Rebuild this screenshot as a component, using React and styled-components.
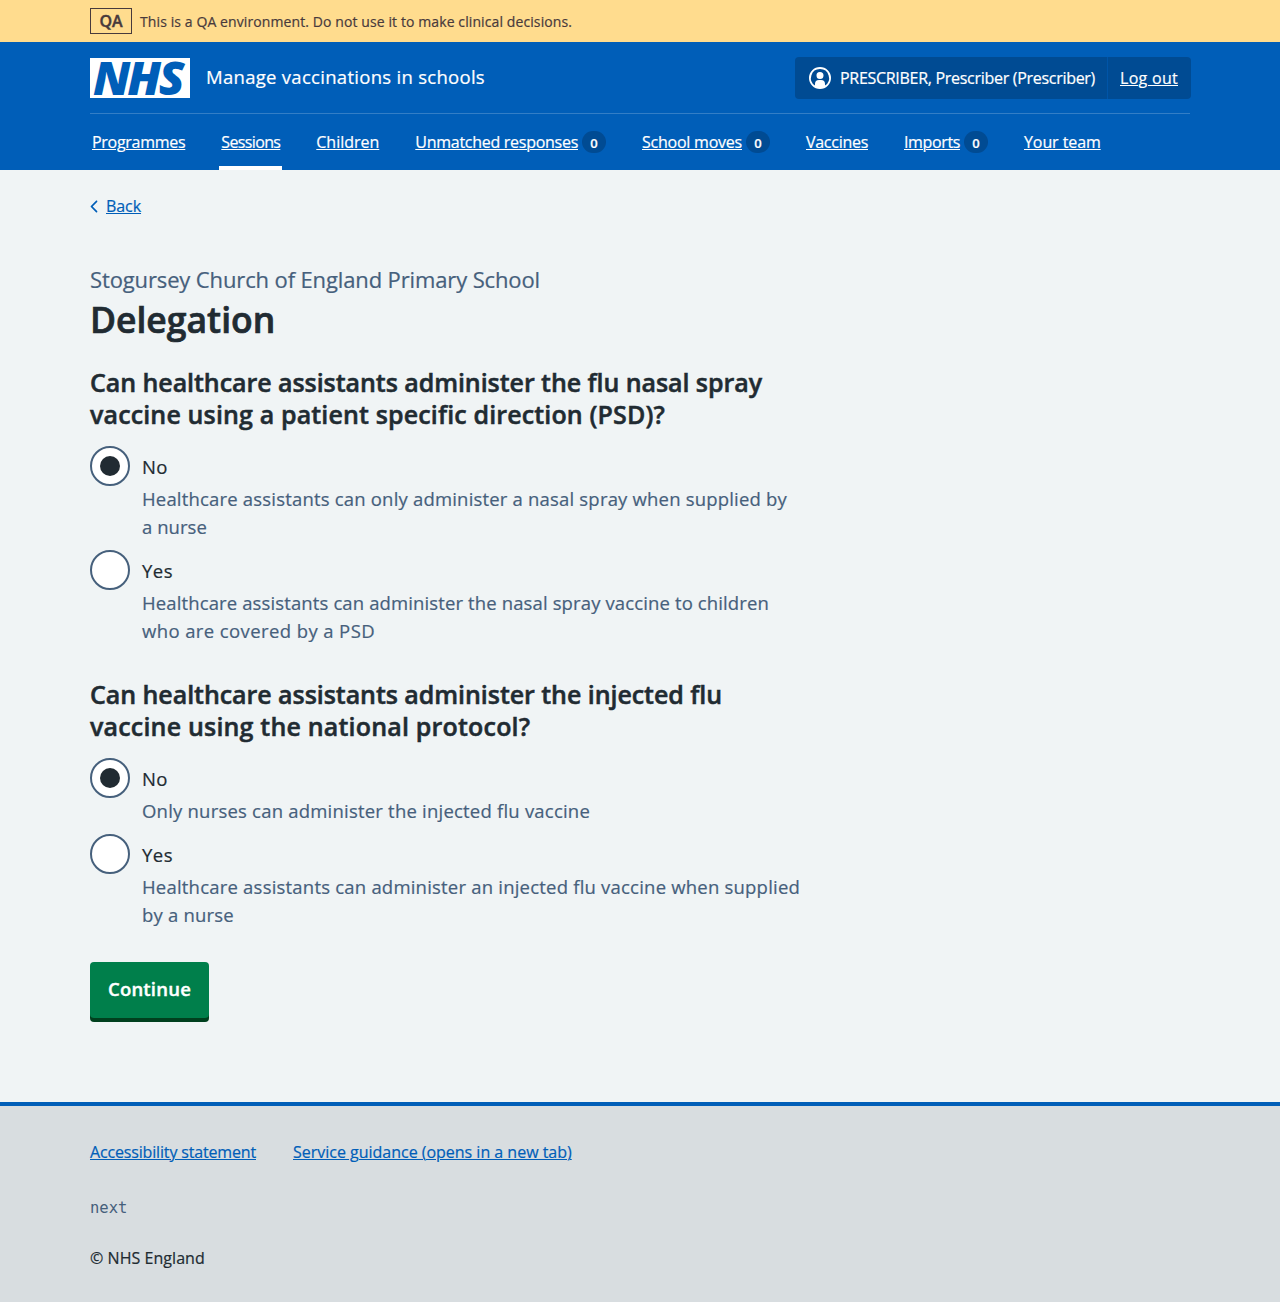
import React from "react";
import styled, { createGlobalStyle } from "styled-components";

const GlobalStyle = createGlobalStyle`
  *, *::before, *::after { box-sizing: border-box; }
  body {
    margin: 0;
    background: #d8dde0;
    color: #212b32;
    font-family: "Open Sans", "Noto Sans", sans-serif;
    font-size: 16px;
    line-height: 24px;
    -webkit-text-stroke: 0.2px;
  }
  h1, h2, p, ul { margin: 0; padding: 0; }
  ul { list-style: none; }
`;

const Container = styled.div`
  width: 1100px;
  margin: 0 auto;
`;

const Tracked = styled.span`
  letter-spacing: ${(p) => p.$track || 0}px;
  white-space: nowrap;
`;

/* Environment banner */
const Banner = styled.div`
  height: 42px;
  background: #ffdc8e;
  color: #483a3c;
`;
const BannerInner = styled(Container)`
  display: flex;
  align-items: center;
  gap: 8px;
  height: 42px;
  font-size: 14px;
`;
const BannerText = styled(Tracked)`
  padding-top: 2px;
`;
const EnvTag = styled.strong`
  width: 42px;
  height: 26px;
  border: 1px solid #483a3c;
  font-size: 16px;
  font-weight: 600;
  line-height: 24px;
  text-align: center;
  -webkit-text-stroke: 0.4px;
`;

/* Header */
const Header = styled.header`
  height: 128px;
  background: #005eb8;
  color: #fff;
`;
const ServiceRow = styled.div`
  display: flex;
  align-items: center;
  height: 72px;
  border-bottom: 1px solid #337ec6;
`;
const Logo = styled.svg`
  display: block;
  width: 100px;
  height: 40px;
  overflow: visible;
  background: #fff;
  fill: #005eb8;
`;
const LogoText = styled.text`
  font-family: "Open Sans", sans-serif;
  font-size: 45.5px;
  font-style: italic;
  font-weight: 800;
  -webkit-text-stroke: 0;
`;
const ServiceName = styled.span`
  flex: 1;
  margin-left: 16px;
  padding-bottom: 2px;
  font-size: 18.5px;
  line-height: 28px;
`;
const Account = styled.div`
  display: flex;
  width: 396px;
  height: 42px;
  margin-right: -1px;
  border-radius: 4px;
  background: #004b93;
  line-height: 42px;
`;
const AccountUser = styled.div`
  display: flex;
  align-items: center;
  gap: 8px;
  width: 313px;
  padding-left: 13px;
  border-right: 1px solid #0055a8;
`;
const UserIcon = styled.svg`
  width: 24px;
  height: 24px;
  flex: none;
  fill: #fff;
`;
const HeaderLink = styled.a`
  color: #fff;
  text-decoration: underline;
  text-decoration-thickness: 1px;
  text-underline-offset: 1px;
`;
const AccountLink = styled(HeaderLink)`
  padding-left: 12px;
`;
const Nav = styled.ul`
  display: flex;
  gap: 32px;
  height: 56px;
`;
const NavItem = styled.li`
  display: flex;
  align-items: center;
  gap: 4px;
  padding: 4px 2px 0;
  border-bottom: 4px solid ${(p) => (p.$current ? "#fff" : "transparent")};
`;
const NavLabel = styled(HeaderLink)`
  width: ${(p) => p.$width}px;
  letter-spacing: ${(p) => p.$track}px;
  white-space: nowrap;
`;
const Count = styled.span`
  width: 24px;
  height: 22px;
  border-radius: 12px;
  background: #004b93;
  font-size: 13px;
  font-weight: 600;
  line-height: 24px;
  text-align: center;
`;

/* Page body */
const Page = styled.main`
  height: 932px;
  padding-top: 24px;
  background: #f0f4f5;
`;
const BackLink = styled.a`
  display: flex;
  align-items: center;
  gap: 6px;
  margin-left: -2px;
  color: #005eb8;
  text-decoration: underline;
  text-decoration-thickness: 1px;
  text-underline-offset: 1px;
`;
const Chevron = styled.svg`
  width: 12px;
  height: 17px;
  fill: #005eb8;
`;
const Caption = styled.p`
  margin-top: 45px;
  color: #46607c;
  font-size: 22px;
  line-height: 32px;
`;
const Title = styled.h1`
  margin-top: 4px;
  font-size: 35.5px;
  font-weight: 600;
  line-height: 40px;
  -webkit-text-stroke: 0.7px;
`;
const Question = styled.h2`
  display: flex;
  flex-direction: column;
  margin-top: ${(p) => p.$gap}px;
  font-size: 25px;
  font-weight: 600;
  line-height: 32px;
  -webkit-text-stroke: 0.5px;
`;
const Options = styled.div`
  display: flex;
  flex-direction: column;
  gap: 9px;
  margin-top: 16px;
`;
const Option = styled.label`
  display: flex;
  gap: 12px;
  font-size: 18.5px;
  line-height: 28px;
`;
const Radio = styled.span`
  display: grid;
  place-items: center;
  flex: none;
  width: 40px;
  height: 40px;
  border: 2px solid #46607c;
  border-radius: 50%;
  background: #fff;
`;
const Dot = styled.span`
  width: 20px;
  height: 20px;
  border-radius: 50%;
  background: #212b32;
`;
const OptionBody = styled.span`
  display: flex;
  flex-direction: column;
  gap: 4px;
  padding-top: 7px;
`;
const Hint = styled.span`
  display: flex;
  flex-direction: column;
  color: #46607c;
`;
const Button = styled.button`
  display: block;
  width: 119px;
  height: 56px;
  margin-top: 33px;
  padding: 0 0 2px;
  border: 0;
  border-radius: 4px;
  background: #007f4b;
  box-shadow: 0 4px 0 #00401e;
  color: #fff;
  font: 600 18.5px/54px "Open Sans", sans-serif;
  text-align: center;
  -webkit-text-stroke: 0.4px;
`;

/* Footer */
const Footer = styled.footer`
  height: 200px;
  padding-top: 34px;
  border-top: 4px solid #005eb8;
  background: #d8dde0;
`;
const FooterLinks = styled.div`
  display: flex;
  gap: 37px;
`;
const FooterLink = styled.a`
  color: #005eb8;
  letter-spacing: ${(p) => p.$track}px;
  text-decoration: underline;
  text-decoration-thickness: 1px;
  text-underline-offset: 1px;
`;
const Version = styled.p`
  margin-top: 32px;
  color: #46607c;
  font-family: "DejaVu Sans Mono", monospace;
  font-size: 15.5px;
  -webkit-text-stroke: 0;
`;
const Copyright = styled.p`
  margin-top: 26px;
`;

const navItems = [
  { label: "Programmes", width: 93.3, track: -0.284 },
  { label: "Sessions", width: 59, track: -0.639, current: true },
  { label: "Children", width: 63, track: -0.012 },
  { label: "Unmatched responses", width: 162.7, track: -0.274, count: 0 },
  { label: "School moves", width: 100, track: -0.228, count: 0 },
  { label: "Vaccines", width: 62, track: -0.277 },
  { label: "Imports", width: 56, track: -0.366, count: 0 },
  { label: "Your team", width: 76.7, track: -0.085 },
];

const questions = [
  {
    gap: 27,
    lines: [
      ["Can healthcare assistants administer the flu nasal spray", -0.056],
      ["vaccine using a patient specific direction (PSD)?", 0.143],
    ],
    options: [
      {
        label: ["No", 0.4],
        checked: true,
        hint: [
          ["Healthcare assistants can only administer a nasal spray when supplied by", 0.187],
          ["a nurse", 0.05],
        ],
      },
      {
        label: ["Yes", 0.48],
        hint: [
          ["Healthcare assistants can administer the nasal spray vaccine to children", 0.124],
          ["who are covered by a PSD", 0.395],
        ],
      },
    ],
  },
  {
    gap: 33,
    lines: [
      ["Can healthcare assistants administer the injected flu", -0.051],
      ["vaccine using the national protocol?", 0.19],
    ],
    options: [
      {
        label: ["No", 0.4],
        checked: true,
        hint: [["Only nurses can administer the injected flu vaccine", 0.21]],
      },
      {
        label: ["Yes", 0.48],
        hint: [
          ["Healthcare assistants can administer an injected flu vaccine when supplied", 0.209],
          ["by a nurse", 0.2],
        ],
      },
    ],
  },
];

function Lines({ lines }) {
  return lines.map(([text, track]) => (
    <Tracked key={text} $track={track}>
      {text}
    </Tracked>
  ));
}

export default function App() {
  return (
    <>
      <GlobalStyle />
      <Banner>
        <BannerInner>
          <EnvTag>
            <Tracked $track={-0.2}>QA</Tracked>
          </EnvTag>
          <BannerText $track={0.099}>
            This is a QA environment. Do not use it to make clinical decisions.
          </BannerText>
        </BannerInner>
      </Banner>
      <Header>
        <Container>
          <ServiceRow>
            <Logo viewBox="0 0 100 40" role="img" aria-label="NHS">
              <LogoText x="2.8 35.9 66.2" y="36.5" transform="scale(1.04 1)">
                NHS
              </LogoText>
            </Logo>
            <ServiceName>
              <Tracked $track={0.29}>Manage vaccinations in schools</Tracked>
            </ServiceName>
            <Account>
              <AccountUser>
                <UserIcon viewBox="0 0 24 24">
                  <path d="M12 1a11 11 0 1 1 0 22 11 11 0 0 1 0-22Zm0 2a9 9 0 0 0-5 16.5V18a4 4 0 0 1 4-4h2a4 4 0 0 1 4 4v1.5A9 9 0 0 0 12 3Zm0 3a3.5 3.5 0 1 1-3.5 3.5A3.4 3.4 0 0 1 12 6Z" />
                </UserIcon>
                <Tracked $track={-0.292}>PRESCRIBER, Prescriber (Prescriber)</Tracked>
              </AccountUser>
              <AccountLink>
                <Tracked $track={0.291}>Log out</Tracked>
              </AccountLink>
            </Account>
          </ServiceRow>
          <Nav>
            {navItems.map((item) => (
              <NavItem key={item.label} $current={item.current}>
                <NavLabel $width={item.width} $track={item.track}>
                  {item.label}
                </NavLabel>
                {item.count !== undefined && <Count>{item.count}</Count>}
              </NavItem>
            ))}
          </Nav>
        </Container>
      </Header>
      <Page>
        <Container>
          <BackLink>
            <Chevron viewBox="5 2 14 20">
              <path d="M15.7 5.3c.4.4.4 1 0 1.4L10.4 12l5.3 5.3c.4.4.4 1 0 1.4-.4.4-1 .4-1.4 0l-6-6a1 1 0 0 1 0-1.4l6-6c.4-.4 1-.4 1.4 0Z" />
            </Chevron>
            <Tracked $track={-0.07}>Back</Tracked>
          </BackLink>
          <Caption>
            <Tracked $track={-0.129}>Stogursey Church of England Primary School</Tracked>
          </Caption>
          <Title>Delegation</Title>
          {questions.map((q) => (
            <React.Fragment key={q.gap}>
              <Question $gap={q.gap}>
                <Lines lines={q.lines} />
              </Question>
              <Options>
                {q.options.map((o) => (
                  <Option key={o.label[0]}>
                    <Radio>{o.checked && <Dot />}</Radio>
                    <OptionBody>
                      <Tracked $track={o.label[1]}>{o.label[0]}</Tracked>
                      <Hint>
                        <Lines lines={o.hint} />
                      </Hint>
                    </OptionBody>
                  </Option>
                ))}
              </Options>
            </React.Fragment>
          ))}
          <Button>
            <Tracked $track={0.2}>Continue</Tracked>
          </Button>
        </Container>
      </Page>
      <Footer>
        <Container>
          <FooterLinks>
            <FooterLink $track={-0.162}>Accessibility statement</FooterLink>
            <FooterLink $track={-0.013}>Service guidance (opens in a new tab)</FooterLink>
          </FooterLinks>
          <Version>next</Version>
          <Copyright>
            <Tracked $track={0.05}>© NHS England</Tracked>
          </Copyright>
        </Container>
      </Footer>
    </>
  );
}
